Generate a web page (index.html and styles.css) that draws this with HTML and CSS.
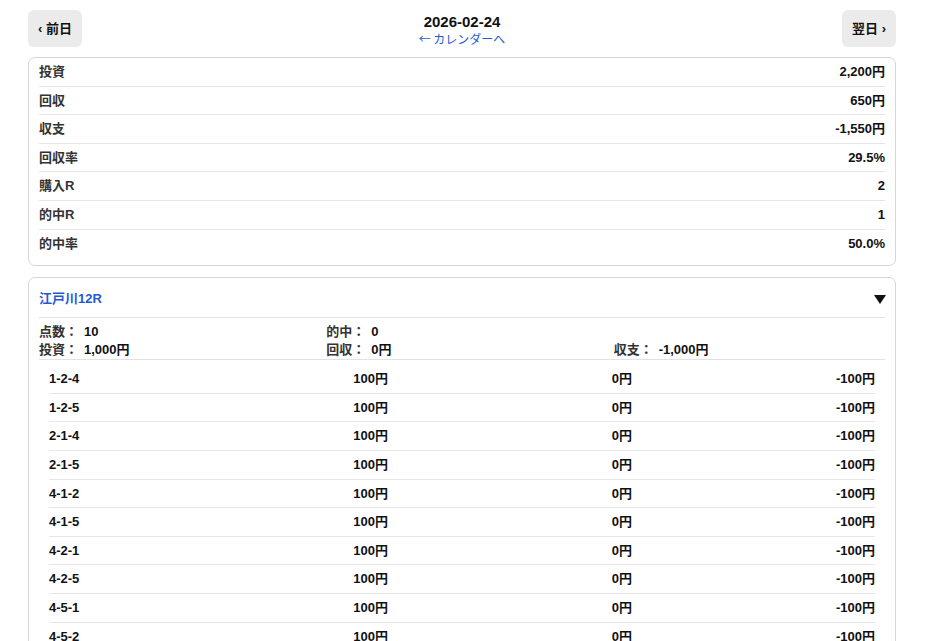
FILE: index.html
```html
<!DOCTYPE html>
<html lang="ja">
<head>
    <meta charset="UTF-8">
    <meta name="viewport" content="width=device-width, initial-scale=1.0">
    <title>2026-02-24 収支</title>
    <link rel="stylesheet" href="styles.css">
</head>
<body>
    <div class="day_wrap">
        <div class="day_head">
            <button type="button" class="nav_btn">‹ 前日</button>
            <div class="day_title">
                <h1>2026-02-24</h1>
                <a href="#" class="back_link">← カレンダーへ</a>
            </div>
            <button type="button" class="nav_btn">翌日 ›</button>
        </div>

        <!-- 日別サマリー -->
        <ul class="summary_card">
            <li><span>投資</span><span>2,200円</span></li>
            <li><span>回収</span><span>650円</span></li>
            <li><span>収支</span><span>-1,550円</span></li>
            <li><span>回収率</span><span>29.5%</span></li>
            <li><span>購入R</span><span>2</span></li>
            <li><span>的中R</span><span>1</span></li>
            <li><span>的中率</span><span>50.0%</span></li>
        </ul>

        <!-- レース別 -->
        <div class="race_card">
            <div class="race_head">
                <span class="race_name">江戸川12R</span>
                <span class="toggle"></span>
            </div>
            <div class="race_stats">
                <div><span class="lbl">点数：</span><span class="val">10</span></div>
                <div><span class="lbl">的中：</span><span class="val">0</span></div>
                <div></div>
                <div><span class="lbl">投資：</span><span class="val">1,000円</span></div>
                <div><span class="lbl">回収：</span><span class="val">0円</span></div>
                <div><span class="lbl">収支：</span><span class="val">-1,000円</span></div>
            </div>
            <div class="bet_list">
                <div class="bet_row"><span>1-2-4</span><span>100円</span><span>0円</span><span>-100円</span></div>
                <div class="bet_row"><span>1-2-5</span><span>100円</span><span>0円</span><span>-100円</span></div>
                <div class="bet_row"><span>2-1-4</span><span>100円</span><span>0円</span><span>-100円</span></div>
                <div class="bet_row"><span>2-1-5</span><span>100円</span><span>0円</span><span>-100円</span></div>
                <div class="bet_row"><span>4-1-2</span><span>100円</span><span>0円</span><span>-100円</span></div>
                <div class="bet_row"><span>4-1-5</span><span>100円</span><span>0円</span><span>-100円</span></div>
                <div class="bet_row"><span>4-2-1</span><span>100円</span><span>0円</span><span>-100円</span></div>
                <div class="bet_row"><span>4-2-5</span><span>100円</span><span>0円</span><span>-100円</span></div>
                <div class="bet_row"><span>4-5-1</span><span>100円</span><span>0円</span><span>-100円</span></div>
                <div class="bet_row"><span>4-5-2</span><span>100円</span><span>0円</span><span>-100円</span></div>
            </div>
        </div>
    </div>
</body>
</html>
```

FILE: styles.css
```css
* {
    margin:0; padding:0; box-sizing:border-box; list-style:none;
}
body {
    font-family:"Liberation Sans", "Noto Sans CJK JP", sans-serif;
    font-size:13px; color:#111; background:#fff;
}
.day_wrap {padding:10px 29px 20px 28px;}

/* header */
.day_head {display:flex; justify-content:space-between; align-items:flex-start;}
.nav_btn {
    font-family:inherit; font-size:13px; font-weight:bold; line-height:17px;
    padding:10px 10px; border:0; border-radius:6px; background:#ebebeb; color:#111;
    cursor:pointer;
}
.day_title {text-align:center; padding-top:3px;}
.day_title h1 {font-size:15px; line-height:18px; font-weight:bold; color:#111;}
.back_link {
    display:block; font-family:"Noto Sans CJK JP", sans-serif;
    font-size:12px; line-height:16px; color:#2458d6; text-decoration:none;
}

/* summary */
.summary_card {
    margin-top:10px; border:1px solid #d6d6d6; border-radius:7px; padding:0 10px 8px;
}
.summary_card li {
    display:flex; justify-content:space-between; font-weight:bold;
    padding:6px 0; line-height:15.6px; border-bottom:1px solid #e6e6e6;
}
.summary_card li:last-child {border-bottom:0;}
.summary_card li span:first-child {color:#333;}

/* race */
.race_card {
    margin-top:11px; border:1px solid #d6d6d6; border-radius:7px; padding:0 10px;
}
.race_head {
    display:flex; justify-content:space-between; align-items:center;
    padding:13px 0 10px; line-height:16px; border-bottom:1px solid #e2e2e2;
}
.race_name {color:#2458d6; font-weight:bold;}
.toggle {
    width:0; height:0; margin-right:-1px;
    border-left:6px solid transparent; border-right:6px solid transparent; border-top:9px solid #111;
}
.race_stats {
    display:grid; grid-template-columns:1fr 1fr 1fr; column-gap:16px;
    padding:5px 0 0; line-height:18px; border-bottom:1px solid #e2e2e2;
}
.race_stats .lbl {color:#333; font-weight:bold;}
.race_stats .val {margin-left:6px; font-weight:bold;}

.bet_list {margin:5px 10px 0;}
.bet_row {
    display:grid; grid-template-columns:170fr 169fr 244fr 243fr;
    padding:6px 0; line-height:15.6px; font-weight:bold; border-bottom:1px solid #e6e6e6;
}
.bet_row span {text-align:right;}
.bet_row span:first-child {text-align:left;}
```
